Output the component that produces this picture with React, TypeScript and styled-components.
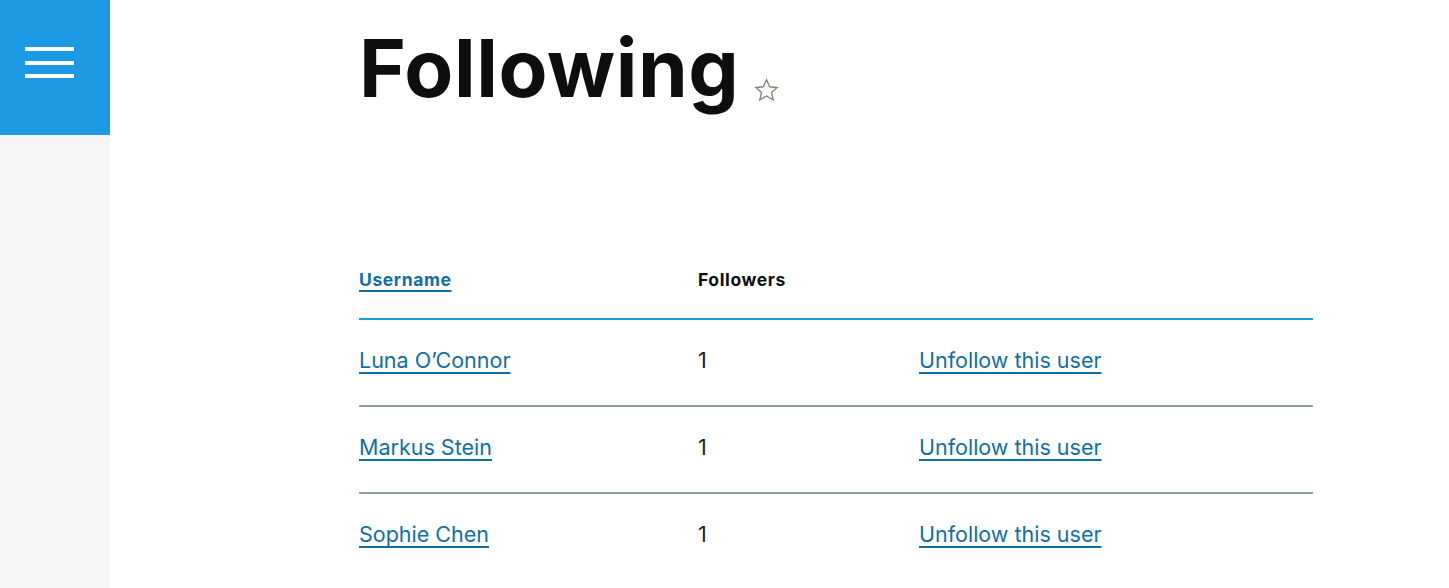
import React from 'react';
import styled, { createGlobalStyle } from 'styled-components';

type UserRow = {
    name: string;
    followers: number;
};

const users: UserRow[] = [
    { name: 'Luna O’Connor', followers: 1 },
    { name: 'Markus Stein', followers: 1 },
    { name: 'Sophie Chen', followers: 1 },
];

const GlobalStyle = createGlobalStyle`
    html, body {
        margin: 0;
        padding: 0;
        background: #ffffff;
        font-family: Inter, "Noto Sans", sans-serif;
        color: #222;
    }
`;

const Page = styled.div`
    display: flex;
    min-height: 588px;
`;

const Sidebar = styled.aside`
    width: 110px;
    flex-shrink: 0;
    background: #f5f6f5;
    display: flex;
    flex-direction: column;
`;

const MenuButton = styled.button`
    width: 110px;
    height: 135px;
    border: 0;
    padding: 47px 0 0 25px;
    background: #1b99e3;
    display: flex;
    flex-direction: column;
    align-items: flex-start;
    justify-content: flex-start;
    gap: 9.5px;
    cursor: pointer;
`;

const Bar = styled.span`
    display: block;
    width: 49px;
    height: 4px;
    background: #ffffff;
`;

const Main = styled.main`
    flex: 1;
    padding: 28px 0 0 249px;
`;

const TitleRow = styled.div`
    display: flex;
    align-items: flex-end;
    gap: 14px;
`;

const Title = styled.h1`
    margin: 0;
    font-size: 80px;
    font-weight: 700;
    letter-spacing: 0.6px;
    line-height: 1;
    color: #0d0e10;
`;

const StarButton = styled.span`
    display: flex;
    margin-bottom: 4px;
`;

const Table = styled.table`
    margin-top: 156px;
    width: 954px;
    border-collapse: collapse;
`;

const HeadCell = styled.th<{ $width?: number }>`
    text-align: left;
    font-size: 17.5px;
    font-weight: 700;
    letter-spacing: 0.6px;
    color: #0d0e10;
    padding: 0 0 24px 0;
    height: 30px;
    border-bottom: 2px solid #1b99e3;
    width: ${(p) => (p.$width ? `${p.$width}px` : 'auto')};
`;

const SortLink = styled.a`
    color: #0f6fa9;
    text-decoration: underline;
    text-underline-offset: 4px;
    text-decoration-thickness: 2px;
`;

const Row = styled.tr`
    & + & td {
        border-top: 2px solid #8d9ea8;
    }
`;

const Cell = styled.td`
    height: 87px;
    padding: 0 0 6px 0;
    box-sizing: border-box;
    font-size: 21.5px;
    color: #222;
    vertical-align: middle;
`;

const UserLink = styled.a`
    color: #0f6fa9;
    text-decoration: underline;
    text-underline-offset: 4px;
    text-decoration-thickness: 2px;
`;

const Star = () => (
    <svg width="27" height="27" viewBox="0 0 24 24" fill="none" stroke="#8a8274" strokeWidth="1.2" strokeLinejoin="miter">
        <path d="M12 2.5l2.8 6.2 6.7.6-5.1 4.5 1.6 6.6L12 16.9l-6 3.5 1.6-6.6-5.1-4.5 6.7-.6z" />
    </svg>
);

export default function App() {
    return (
        <>
            <GlobalStyle />
            <Page>
                <Sidebar>
                    <MenuButton aria-label="Menu">
                        <Bar />
                        <Bar />
                        <Bar />
                    </MenuButton>
                </Sidebar>
                <Main>
                    <TitleRow>
                        <Title>Following</Title>
                        <StarButton><Star /></StarButton>
                    </TitleRow>
                    <Table>
                        <thead>
                            <tr>
                                <HeadCell $width={339}><SortLink href="#">Username</SortLink></HeadCell>
                                <HeadCell $width={221}>Followers</HeadCell>
                                <HeadCell />
                            </tr>
                        </thead>
                        <tbody>
                            {users.map((u) => (
                                <Row key={u.name}>
                                    <Cell><UserLink href="#">{u.name}</UserLink></Cell>
                                    <Cell>{u.followers}</Cell>
                                    <Cell><UserLink href="#">Unfollow this user</UserLink></Cell>
                                </Row>
                            ))}
                        </tbody>
                    </Table>
                </Main>
            </Page>
        </>
    );
}
